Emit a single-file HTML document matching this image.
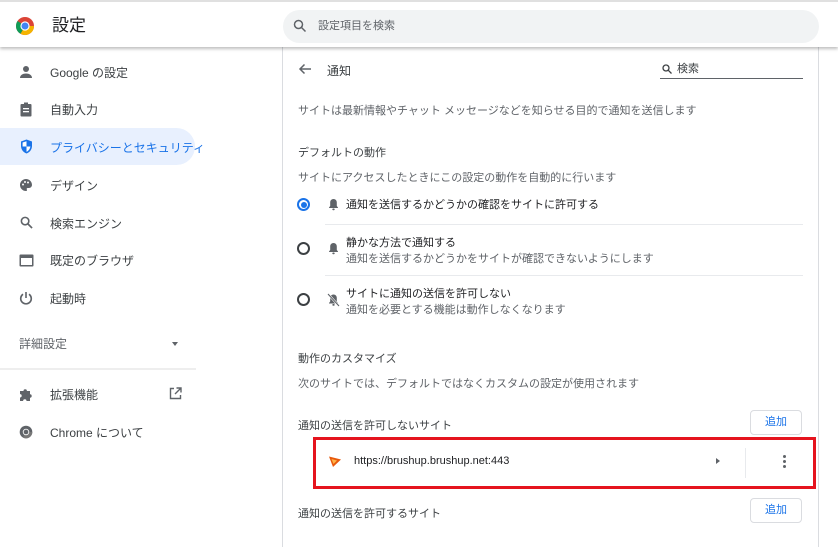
<!DOCTYPE html>
<html><head><meta charset="utf-8"><style>
*{margin:0;padding:0;box-sizing:border-box}
body{width:838px;height:542px;overflow:hidden;background:#fff;font-family:"Liberation Sans","Noto Sans CJK JP",sans-serif;color:#202124;position:relative}
.a{position:absolute;white-space:nowrap;line-height:1.2}
.hdr{position:absolute;left:0;top:0;width:838px;height:47px;background:#fff;border-top:2px solid #e0e0e0;box-shadow:0 2px 3px rgba(0,0,0,.25);z-index:2}
.s{font-size:12px;color:#3c4043;padding-top:2px}
.g{font-size:11px;color:#5f6368;padding-top:2px}
.nav{font-size:12px;color:#3c4043;padding-top:2px}
.hr{position:absolute;height:1px;background:#e8eaed}
.btn{position:absolute;width:52px;height:25px;border:1px solid #dadce0;border-radius:4px;color:#1a73e8;font-size:11px;text-align:center;line-height:23px;background:#fff}
</style></head><body>
<div class="hdr">
 <svg class="a" style="left:15px;top:14px" width="20" height="20" viewBox="0 0 20 20"><circle cx="10" cy="10" r="9" fill="#db4437"/><path d="M10 10 L19 10 A9 9 0 0 1 5.5 17.8Z" fill="#f4b400"/><path d="M10 10 L5.5 17.8 A9 9 0 0 1 1 10 A9 9 0 0 1 2.5 5Z" fill="#0f9d58"/><circle cx="10" cy="10" r="4.6" fill="#fff"/><circle cx="10" cy="10" r="3.5" fill="#4285f4"/></svg>
 <div class="a" style="left:52px;top:14px;font-size:17px;color:#202124">設定</div>
 <div class="a" style="left:283px;top:8px;width:536px;height:33px;border-radius:17px;background:#f1f3f4"></div>
 <svg class="a" style="left:293px;top:17px" width="14" height="14" viewBox="0 0 14 14"><circle cx="5.5" cy="5.5" r="4" fill="none" stroke="#5f6368" stroke-width="1.5"/><path d="M8.5 8.5L12.5 12.5" stroke="#5f6368" stroke-width="1.5"/></svg>
 <div class="a g" style="left:318px;top:16px;color:#5f6368">設定項目を検索</div>
</div>
<!-- sidebar -->
<div class="a" style="left:0;top:128px;width:195px;height:37px;background:#e8f0fe;border-radius:0 19px 19px 0"></div>
<svg class="a" style="left:19px;top:65px" width="14" height="14" viewBox="0 0 14 14"><circle cx="7" cy="4" r="3" fill="#5f6368"/><path d="M1 13c0-3 3-4.5 6-4.5s6 1.5 6 4.5z" fill="#5f6368"/></svg>
<div class="a nav" style="left:50px;top:64px">Google の設定</div>
<svg class="a" style="left:20px;top:102px" width="12" height="15" viewBox="0 0 12 15"><rect x="0.5" y="2" width="11" height="12.5" rx="1" fill="#5f6368"/><rect x="3" y="6" width="6" height="1.3" fill="#fff"/><rect x="3" y="9" width="6" height="1.3" fill="#fff"/><rect x="4" y="0.5" width="4" height="2.5" fill="#5f6368"/></svg>
<div class="a nav" style="left:50px;top:101px">自動入力</div>
<svg class="a" style="left:20px;top:139px" width="13" height="15" viewBox="0 0 13 15"><path d="M6.5 0.5L12 2.5V7c0 3.5-2.5 6.5-5.5 7.5C3.5 13.5 1 10.5 1 7V2.5z" fill="#1a73e8"/><path d="M6.5 2.2V7.5H2.6V3.5z" fill="#fff"/><path d="M6.5 7.5H10.4C10 10 8.5 12 6.5 12.8z" fill="#fff"/></svg>
<div class="a nav" style="left:50px;top:139px;color:#1a73e8">プライバシーとセキュリティ</div>
<svg class="a" style="left:19px;top:178px" width="14" height="14" viewBox="0 0 14 14"><path d="M7 1a6 6 0 0 0 0 12c1 0 1.3-.8.8-1.5-.4-.6 0-1.5 1-1.5H10a3 3 0 0 0 3-3C13 3.5 10.3 1 7 1z" fill="#5f6368"/><circle cx="4" cy="6.5" r="1" fill="#fff"/><circle cx="6" cy="4" r="1" fill="#fff"/><circle cx="9" cy="4.5" r="1" fill="#fff"/></svg>
<div class="a nav" style="left:50px;top:177px">デザイン</div>
<svg class="a" style="left:20px;top:216px" width="13" height="13" viewBox="0 0 14 14"><circle cx="5.5" cy="5.5" r="4" fill="none" stroke="#5f6368" stroke-width="1.7"/><path d="M8.5 8.5L13 13" stroke="#5f6368" stroke-width="1.8"/></svg>
<div class="a nav" style="left:50px;top:215px">検索エンジン</div>
<svg class="a" style="left:19px;top:254px" width="15" height="13" viewBox="0 0 15 13"><rect x="0.5" y="0.5" width="14" height="12" rx="1" fill="#5f6368"/><rect x="2" y="4" width="11" height="7" fill="#fff"/></svg>
<div class="a nav" style="left:50px;top:252px">既定のブラウザ</div>
<svg class="a" style="left:19px;top:291px" width="14" height="14" viewBox="0 0 14 14"><path d="M4 3.2A5.3 5.3 0 1 0 10 3.2" fill="none" stroke="#5f6368" stroke-width="1.6"/><path d="M7 1v6" stroke="#5f6368" stroke-width="1.6"/></svg>
<div class="a nav" style="left:50px;top:290px">起動時</div>
<div class="a nav" style="left:19px;top:335px;color:#5f6368">詳細設定</div>
<div class="a" style="left:172px;top:342px;width:0;height:0;border-left:3.5px solid transparent;border-right:3.5px solid transparent;border-top:4px solid #5f6368"></div>
<div class="hr" style="left:0;top:368px;width:196px;height:2px;background:#eeeeee"></div>
<svg class="a" style="left:19px;top:387px" width="15" height="15" viewBox="0 0 15 15"><path d="M1 4h3.5a1.7 1.7 0 1 1 3.4 0H11v3.3a1.7 1.7 0 1 1 0 3.4V14H7.5a1.7 1.7 0 1 0-3.4 0H1v-3.5a1.7 1.7 0 1 0 0-3.4z" fill="#5f6368"/></svg>
<div class="a nav" style="left:50px;top:386px">拡張機能</div>
<svg class="a" style="left:169px;top:387px" width="13" height="13" viewBox="0 0 13 13"><path d="M5 1.5H1.5v10h10V8" fill="none" stroke="#5f6368" stroke-width="1.4"/><path d="M7.5 1h4.5v4.5M12 1L6 7" fill="none" stroke="#5f6368" stroke-width="1.4"/></svg>
<svg class="a" style="left:19px;top:425px" width="14" height="14" viewBox="0 0 20 20"><circle cx="10" cy="10" r="9" fill="#5f6368"/><path d="M10 10 L19 10 A9 9 0 0 1 5.5 17.8Z" fill="#777"/><circle cx="10" cy="10" r="4.6" fill="#fff"/><circle cx="10" cy="10" r="3.4" fill="#5f6368"/></svg>
<div class="a nav" style="left:50px;top:424px">Chrome について</div>
<!-- card -->
<div class="a" style="left:282px;top:47px;width:537px;height:500px;border-left:1px solid #dadce0;border-right:1px solid #dadce0"></div>
<svg class="a" style="left:298px;top:63px" width="14" height="12" viewBox="0 0 14 12"><path d="M13 6H2M6.5 1.5L2 6l4.5 4.5" fill="none" stroke="#5f6368" stroke-width="1.5"/></svg>
<div class="a s" style="left:327px;top:62px">通知</div>
<svg class="a" style="left:662px;top:64px" width="10" height="10" viewBox="0 0 10 10"><circle cx="4" cy="4" r="3" fill="none" stroke="#3c4043" stroke-width="1.3"/><path d="M6.2 6.2L9.5 9.5" stroke="#3c4043" stroke-width="1.3"/></svg>
<div class="a g" style="left:677px;top:61px;color:#3c4043">検索</div>
<div class="a" style="left:660px;top:78px;width:143px;height:1px;background:#5f6368"></div>
<div class="a g" style="left:298px;top:103px">サイトは最新情報やチャット メッセージなどを知らせる目的で通知を送信します</div>
<div class="a g" style="left:298px;top:145px;color:#3c4043">デフォルトの動作</div>
<div class="a g" style="left:298px;top:170px">サイトにアクセスしたときにこの設定の動作を自動的に行います</div>
<div class="a" style="left:297px;top:198px;width:13px;height:13px;border:2px solid #1a73e8;border-radius:50%"></div>
<div class="a" style="left:300.5px;top:201.5px;width:6px;height:6px;background:#1a73e8;border-radius:50%"></div>
<svg class="a" style="left:328px;top:198px" width="11" height="13" viewBox="0 0 11 13"><path d="M5.5 1c-2 0-3.3 1.5-3.3 3.5V8L1 9.5v.5h9v-.5L8.8 8V4.5C8.8 2.5 7.5 1 5.5 1z" fill="#5f6368"/><rect x="4.3" y="10.5" width="2.4" height="1.8" rx=".9" fill="#5f6368"/></svg>
<div class="a g" style="left:346px;top:197px;color:#202124">通知を送信するかどうかの確認をサイトに許可する</div>
<div class="hr" style="left:325px;top:224px;width:478px"></div>
<div class="a" style="left:297px;top:242px;width:13px;height:13px;border:2px solid #3c4043;border-radius:50%"></div>
<svg class="a" style="left:328px;top:242px" width="11" height="13" viewBox="0 0 11 13"><path d="M5.5 1c-2 0-3.3 1.5-3.3 3.5V8L1 9.5v.5h9v-.5L8.8 8V4.5C8.8 2.5 7.5 1 5.5 1z" fill="#5f6368"/><rect x="4.3" y="10.5" width="2.4" height="1.8" rx=".9" fill="#5f6368"/></svg>
<div class="a g" style="left:346px;top:235px;color:#202124">静かな方法で通知する</div>
<div class="a g" style="left:346px;top:251px">通知を送信するかどうかをサイトが確認できないようにします</div>
<div class="hr" style="left:325px;top:275px;width:478px"></div>
<div class="a" style="left:297px;top:293px;width:13px;height:13px;border:2px solid #3c4043;border-radius:50%"></div>
<svg class="a" style="left:327px;top:293px" width="13" height="14" viewBox="0 0 13 14"><path d="M6.5 1.5c-2 0-3.3 1.5-3.3 3.5V8.5L2 10v.5h9v-.5L9.8 8.5V5c0-2-1.3-3.5-3.3-3.5z" fill="#5f6368"/><rect x="5.3" y="11" width="2.4" height="1.8" rx=".9" fill="#5f6368"/><path d="M1 1l11 12" stroke="#fff" stroke-width="2.2"/><path d="M1 1l11 12" stroke="#5f6368" stroke-width="1.1"/></svg>
<div class="a g" style="left:346px;top:286px;color:#202124">サイトに通知の送信を許可しない</div>
<div class="a g" style="left:346px;top:302px">通知を必要とする機能は動作しなくなります</div>
<div class="a g" style="left:298px;top:351px;color:#3c4043">動作のカスタマイズ</div>
<div class="a g" style="left:298px;top:376px">次のサイトでは、デフォルトではなくカスタムの設定が使用されます</div>
<div class="a g" style="left:298px;top:418px;color:#3c4043">通知の送信を許可しないサイト</div>
<div class="btn" style="left:750px;top:410px">追加</div>
<div class="a" style="left:313px;top:437px;width:503px;height:52px;border:3px solid #e5141e"></div>
<svg class="a" style="left:328px;top:454px" width="14" height="14" viewBox="0 0 14 14"><path d="M1 2.5L13 5.5 5 13z" fill="#e8590c"/><path d="M3.5 5L9 6.5 5.5 10z" fill="#ffb347"/></svg>
<div class="a g" style="left:354px;top:453px;color:#202124">https://brushup.brushup.net:443</div>
<div class="a" style="left:716px;top:458px;width:0;height:0;border-top:3.5px solid transparent;border-bottom:3.5px solid transparent;border-left:4px solid #5f6368"></div>
<div class="a" style="left:745px;top:448px;width:1px;height:30px;background:#e8eaed"></div>
<div class="a" style="left:783px;top:455px;width:3px;height:3px;background:#5f6368;border-radius:50%"></div>
<div class="a" style="left:783px;top:460px;width:3px;height:3px;background:#5f6368;border-radius:50%"></div>
<div class="a" style="left:783px;top:465px;width:3px;height:3px;background:#5f6368;border-radius:50%"></div>
<div class="a g" style="left:298px;top:506px;color:#3c4043">通知の送信を許可するサイト</div>
<div class="btn" style="left:750px;top:498px">追加</div>
</body></html>
